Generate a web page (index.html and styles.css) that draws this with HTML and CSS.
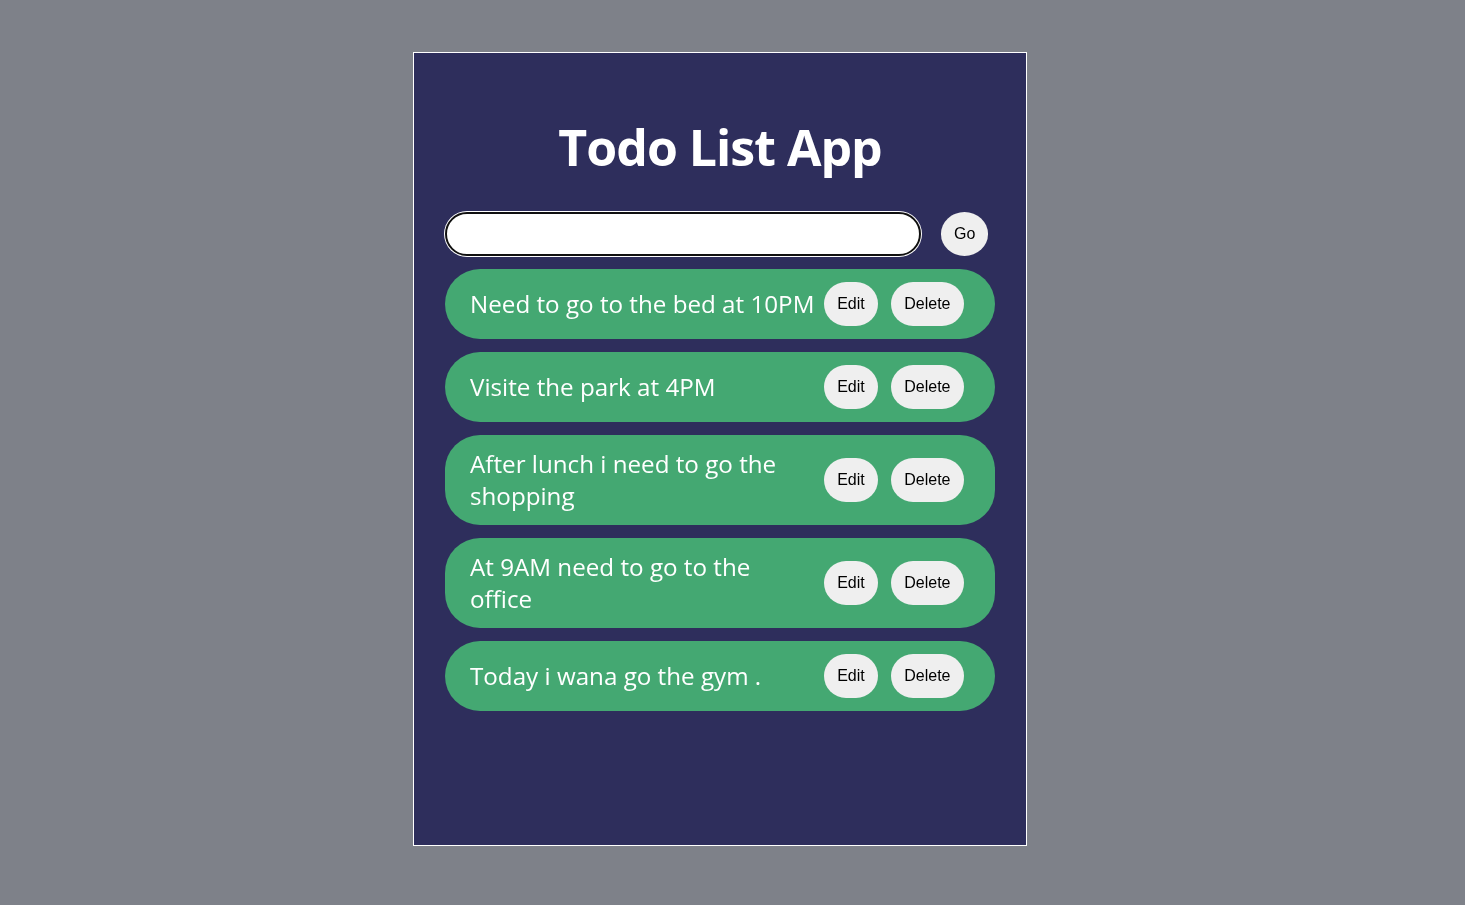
FILE: index.html
```html
<!DOCTYPE html>
<html lang="en">
<head>
<meta charset="utf-8">
<title>Todo List App</title>
<link rel="stylesheet" href="styles.css">
</head>
<body>
<main class="app">
  <h1 class="title">Todo List App</h1>
  <form class="add-row" onsubmit="return false">
    <input class="add-input" type="text" aria-label="New todo" autofocus>
    <button class="btn btn-go" type="submit">Go</button>
  </form>
  <ul class="list">
    <li class="item"><span class="item-text">Need to go to the bed at 10PM</span><button class="btn btn-edit">Edit</button><button class="btn btn-delete">Delete</button></li>
    <li class="item"><span class="item-text">Visite the park at 4PM</span><button class="btn btn-edit">Edit</button><button class="btn btn-delete">Delete</button></li>
    <li class="item"><span class="item-text">After lunch i need to go the shopping</span><button class="btn btn-edit">Edit</button><button class="btn btn-delete">Delete</button></li>
    <li class="item"><span class="item-text">At 9AM need to go to the office</span><button class="btn btn-edit">Edit</button><button class="btn btn-delete">Delete</button></li>
    <li class="item"><span class="item-text">Today i wana go the gym .</span><button class="btn btn-edit">Edit</button><button class="btn btn-delete">Delete</button></li>
  </ul>
</main>
</body>
</html>
```

FILE: styles.css
```css
html, body {
  margin: 0;
  padding: 0;
  background: #7e8189;
  height: 100%;
}

body {
  padding: 52px 0 0 413px;
  box-sizing: border-box;
  font-family: "Open Sans", "Noto Sans", sans-serif;
}

.app {
  width: 612px;
  height: 792px;
  background: #2e2e5c;
  border: 1px solid #ffffff;
  box-sizing: content-box;
  display: flex;
  flex-direction: column;
  align-items: center;
}

.title {
  margin: 60px 0 0;
  color: #ffffff;
  font-size: 50px;
  font-weight: 700;
  line-height: 68px;
  letter-spacing: -1px;
}

.add-row {
  width: 550px;
  margin: 31px 0 0;
  display: flex;
  align-items: center;
}

.add-input {
  width: 476px;
  height: 44px;
  box-sizing: border-box;
  border: 2px solid #101010;
  border-radius: 22px;
  box-shadow: 0 0 0 1px #ffffff;
  background: #ffffff;
  outline: none;
  padding: 0 10px;
  font-size: 16px;
  caret-color: #000000;
}

.btn {
  font-family: "Liberation Sans", Arial, sans-serif;
  font-size: 16px;
  line-height: 18px;
  color: #000000;
  background: #efefef;
  border: none;
  border-radius: 22px;
  padding: 13px;
  cursor: pointer;
}

.btn-go {
  margin-left: 20px;
  border-radius: 50%;
}

.list {
  list-style: none;
  margin: 13px 0 0;
  padding: 0;
  width: 550px;
  display: flex;
  flex-direction: column;
  gap: 13px;
}

.item {
  display: flex;
  align-items: center;
  background: #44a872;
  border-radius: 35px;
  padding: 13px 31px 13px 25px;
}

.item-text {
  flex: 1;
  color: #ffffff;
  font-size: 24.2px;
  line-height: 32px;
}

.btn-edit {
  margin-left: 8px;
}

.btn-delete {
  margin-left: 13px;
  padding: 13px 13.5px;
}
```
